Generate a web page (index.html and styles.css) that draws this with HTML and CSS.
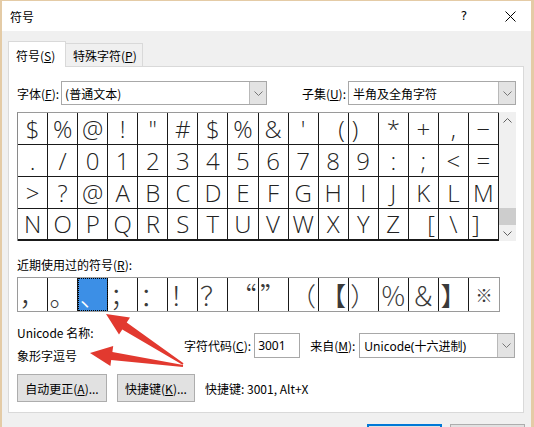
FILE: index.html
```html
<!DOCTYPE html>
<html lang="zh-CN">
<head>
<meta charset="utf-8">
<title>符号</title>
<link rel="stylesheet" href="styles.css">
</head>
<body>
<div class="window">
  <div class="titlebar">
    <span class="title">符号</span>
    <span class="help">?</span>
    <svg class="close" width="11" height="11" viewBox="0 0 11 11"><path d="M0.5 0.5 L10.5 10.5 M10.5 0.5 L0.5 10.5" stroke="#000" stroke-width="1" fill="none"/></svg>
  </div>
  <div class="body">
    <div class="tabs">
      <div class="tab active">符号(<u>S</u>)</div>
      <div class="tab">特殊字符(<u>P</u>)</div>
    </div>
    <div class="panel">
      <div class="font-row">
        <div class="field">
          <span class="lbl">字体(<u>F</u>):</span>
          <div class="select sel-font"><span class="val">(普通文本)</span><span class="drop"><svg width="9" height="5" viewBox="0 0 9 5"><path d="M0.5 0.5 L4.5 4.5 L8.5 0.5" stroke="#777" fill="none"/></svg></span></div>
        </div>
        <div class="field">
          <span class="lbl">子集(<u>U</u>):</span>
          <div class="select sel-sub"><span class="val">半角及全角字符</span><span class="drop"><svg width="9" height="5" viewBox="0 0 9 5"><path d="M0.5 0.5 L4.5 4.5 L8.5 0.5" stroke="#777" fill="none"/></svg></span></div>
        </div>
      </div>

      <div class="grid-wrap">
        <div class="grid">
          <div class="c">$</div><div class="c">%</div><div class="c">@</div><div class="c">!</div><div class="c">"</div><div class="c">#</div><div class="c">$</div><div class="c">%</div><div class="c">&amp;</div><div class="c">'</div><div class="c r">(</div><div class="c l">)</div><div class="c">*</div><div class="c">+</div><div class="c">,</div><div class="c">−</div>
          <div class="c">.</div><div class="c">/</div><div class="c">0</div><div class="c">1</div><div class="c">2</div><div class="c">3</div><div class="c">4</div><div class="c">5</div><div class="c">6</div><div class="c">7</div><div class="c">8</div><div class="c">9</div><div class="c">:</div><div class="c">;</div><div class="c">&lt;</div><div class="c">=</div>
          <div class="c">&gt;</div><div class="c">?</div><div class="c">@</div><div class="c">A</div><div class="c">B</div><div class="c">C</div><div class="c">D</div><div class="c">E</div><div class="c">F</div><div class="c">G</div><div class="c">H</div><div class="c">I</div><div class="c">J</div><div class="c">K</div><div class="c">L</div><div class="c">M</div>
          <div class="c">N</div><div class="c">O</div><div class="c">P</div><div class="c">Q</div><div class="c">R</div><div class="c">S</div><div class="c">T</div><div class="c">U</div><div class="c">V</div><div class="c">W</div><div class="c">X</div><div class="c">Y</div><div class="c">Z</div><div class="c r">[</div><div class="c">\</div><div class="c l">]</div>
        </div>
        <div class="scrollbar">
          <div class="sb-btn"><svg width="9" height="5" viewBox="0 0 9 5"><path d="M0.5 4.5 L4.5 0.5 L8.5 4.5" stroke="#606060" fill="none"/></svg></div>
          <div class="sb-track"></div>
          <div class="sb-thumb"></div>
          <div class="sb-btn"><svg width="9" height="5" viewBox="0 0 9 5"><path d="M0.5 0.5 L4.5 4.5 L8.5 0.5" stroke="#606060" fill="none"/></svg></div>
        </div>
      </div>

      <div class="recent-label">近期使用过的符号(<u>R</u>):</div>
      <div class="recent">
        <div class="rc">，</div><div class="rc">。</div><div class="rc sel">、</div><div class="rc">；</div><div class="rc">：</div><div class="rc">！</div><div class="rc">？</div><div class="rc q">“</div><div class="rc">”</div><div class="rc">（</div><div class="rc">【</div><div class="rc">）</div><div class="rc">％</div><div class="rc">＆</div><div class="rc">】</div><div class="rc">※</div>
      </div>

      <div class="info-row">
        <div class="name-col">
          <div class="line">Unicode 名称:</div>
          <div class="line name">象形字逗号</div>
        </div>
        <div class="code-group">
          <span class="lbl">字符代码(<u>C</u>):</span>
          <div class="input">3001</div>
          <span class="lbl from">来自(<u>M</u>):</span>
          <div class="select sel-from"><span class="val">Unicode(十六进制)</span><span class="drop"><svg width="9" height="5" viewBox="0 0 9 5"><path d="M0.5 0.5 L4.5 4.5 L8.5 0.5" stroke="#777" fill="none"/></svg></span></div>
        </div>
      </div>

      <div class="btn-row">
        <div class="btn btn-auto">自动更正(<u>A</u>)...</div>
        <div class="btn btn-key">快捷键(<u>K</u>)...</div>
        <span class="shortcut">快捷键: 3001, Alt+X</span>
      </div>
    </div>
    <div class="footer">
      <div class="fbtn primary"></div>
      <div class="fbtn"></div>
    </div>
  </div>

  <svg class="arrows" width="534" height="427" viewBox="0 0 534 427">
    <polygon points="106,314 130,317.6 126.7,322.6 183.5,363.2 182.5,364.8 122.3,329.4 119,334.4" fill="#e2392f"/>
    <polygon points="90,353 113.2,346.1 112.4,352 183.1,365 182.9,367 111.2,360 110.4,365.9" fill="#e2392f"/>
  </svg>
</div>
</body>
</html>
```

FILE: styles.css
```css
* { box-sizing: border-box; }

body {
  margin: 0;
  font-family: "Noto Sans CJK SC", "Noto Sans", sans-serif;
  font-size: 12px;
  color: #000;
  background: #f0f0f0;
}

.window {
  position: relative;
  width: 534px;
  height: 427px;
  border-top: 1px solid #e4cba6;
  border-left: 2px solid #e4cba6;
  border-right: 3px solid #e4cba6;
  background: #f0f0f0;
  overflow: hidden;
}

u { text-decoration: underline; text-underline-offset: 1px; }

.titlebar {
  height: 30px;
  background: #fff;
  display: flex;
  align-items: center;
  padding-left: 8px;
}
.title { font-size: 12px; }
.help {
  margin-left: auto;
  font-family: "DejaVu Sans", sans-serif;
  font-size: 12px;
  margin-right: 38px;
}
.close { margin-right: 15px; }

.body { padding: 10px 0 0 6px; }

.tabs { display: flex; align-items: flex-end; height: 25px; }
.tab {
  height: 23px;
  padding: 0 0 0 7px;
  border: 1px solid #d9d9d9;
  border-bottom: none;
  border-left: none;
  background: #f0f0f0;
  display: flex;
  align-items: center;
  width: 77px;
  white-space: nowrap;
  flex-shrink: 0;
}
.tab.active {
  height: 26px;
  width: 58px;
  border-left: 1px solid #d9d9d9;
  background: #fff;
  position: relative;
  z-index: 1;
  margin-bottom: -1px;
  padding-left: 7px;
  padding-top: 2px;
}

.panel {
  width: 516px;
  height: 347px;
  border: 1px solid #d9d9d9;
  background: #fff;
  padding: 14px 7px 0 8px;
}

.lbl { white-space: nowrap; flex-shrink: 0; }

.font-row { display: flex; justify-content: space-between; height: 24px; }
.field { display: flex; align-items: center; }
.field .lbl { margin-right: 2px; }
.select {
  height: 24px;
  border: 1px solid #a8a8a8;
  display: flex;
  align-items: stretch;
  background: #fff;
  flex-shrink: 0;
}
.select .val { flex: 1; padding-left: 3px; display: flex; align-items: center; white-space: nowrap; }
.select .drop {
  width: 17px;
  background: #e3e3e3;
  border-left: 1px solid #b9b9b9;
  display: flex;
  align-items: center;
  justify-content: center;
}
.sel-font { width: 206px; }
.sel-sub { width: 168px; }
.sel-sub .val { padding-left: 4px; }

.grid-wrap { display: flex; margin-top: 7px; height: 129px; }
.grid {
  width: 482px;
  display: grid;
  grid-template-columns: repeat(16, 1fr);
  grid-template-rows: repeat(4, 32px);
  border-top: 1px solid #9a9a9a;
  border-left: 1px solid #8a8a8a;
  font-family: "Open Sans", "Noto Sans", sans-serif;
  font-weight: 300;
  font-size: 24px;
}
.c {
  border-right: 1px solid #1a1a1a;
  border-bottom: 1px solid #1a1a1a;
  display: flex;
  align-items: center;
  justify-content: center;
  line-height: 1;
  color: #222;
}
.c.r { justify-content: flex-end; padding-right: 3px; }
.c.l { justify-content: flex-start; padding-left: 3px; }
.grid .c:nth-last-child(-n+16) { border-bottom-width: 2px; }

.scrollbar {
  width: 17px;
  background: #f0f0f0;
  display: flex;
  flex-direction: column;
}
.sb-btn { height: 16px; display: flex; align-items: center; justify-content: center; }
.sb-track { flex: 1; }
.sb-thumb { height: 17px; background: #cdcdcd; }

.recent-label { margin-top: 16px; line-height: 16px; }
.recent {
  margin-top: 4px;
  width: 483px;
  height: 35px;
  border: 1px solid #9a9a9a;
  display: grid;
  grid-template-columns: repeat(16, 1fr);
  font-family: "Noto Sans CJK SC", sans-serif;
  font-weight: 300;
  font-size: 26px;
  color: #3a3a3a;
}
.rc {
  border-right: 1px solid #1a1a1a;
  display: flex;
  align-items: center;
  justify-content: center;
  overflow: visible;
  line-height: 33px;
  white-space: nowrap;
}
.rc.q { justify-content: flex-start; padding-left: 2px; }
.rc:last-child { border-right: none; font-size: 17px; }
.rc.sel {
  background: #3c8fe6;
  color: #fff;
  outline: 1px dotted #000;
  outline-offset: -1px;
}

.info-row { display: flex; margin-top: 13px; }
.name-col { width: 167px; flex-shrink: 0; }
.name-col .line { line-height: 16px; white-space: nowrap; }
.name-col .name { margin-top: 7px; }
.code-group { display: flex; align-items: center; margin-top: 8px; height: 25px; }
.input {
  width: 46px;
  height: 25px;
  border: 1px solid #a8a8a8;
  margin-left: 3px;
  padding-left: 3px;
  display: flex;
  align-items: center;
  font-family: "Noto Sans", sans-serif;
  flex-shrink: 0;
}
.lbl.from { margin-left: 10px; margin-right: 4px; }
.sel-from { width: 156px; height: 25px; }
.sel-from .val { font-family: "Noto Sans", "Noto Sans CJK SC", sans-serif; padding-left: 4px; }

.btn-row { display: flex; align-items: center; margin-top: 10px; }
.btn {
  height: 28px;
  background: #e1e1e1;
  border: 1px solid #adadad;
  display: flex;
  align-items: center;
  justify-content: center;
  white-space: nowrap;
}
.btn-auto { width: 90px; }
.btn-key { width: 78px; margin-left: 10px; }
.shortcut { margin-left: 10px; white-space: nowrap; }

.footer { display: flex; justify-content: flex-end; gap: 8px; margin-top: 11px; padding-right: 6px; }
.fbtn { width: 75px; height: 23px; background: #e1e1e1; border: 1px solid #adadad; }
.fbtn.primary { border: 2px solid #0078d7; }

.arrows { position: absolute; left: -2px; top: -1px; pointer-events: none; }
```
